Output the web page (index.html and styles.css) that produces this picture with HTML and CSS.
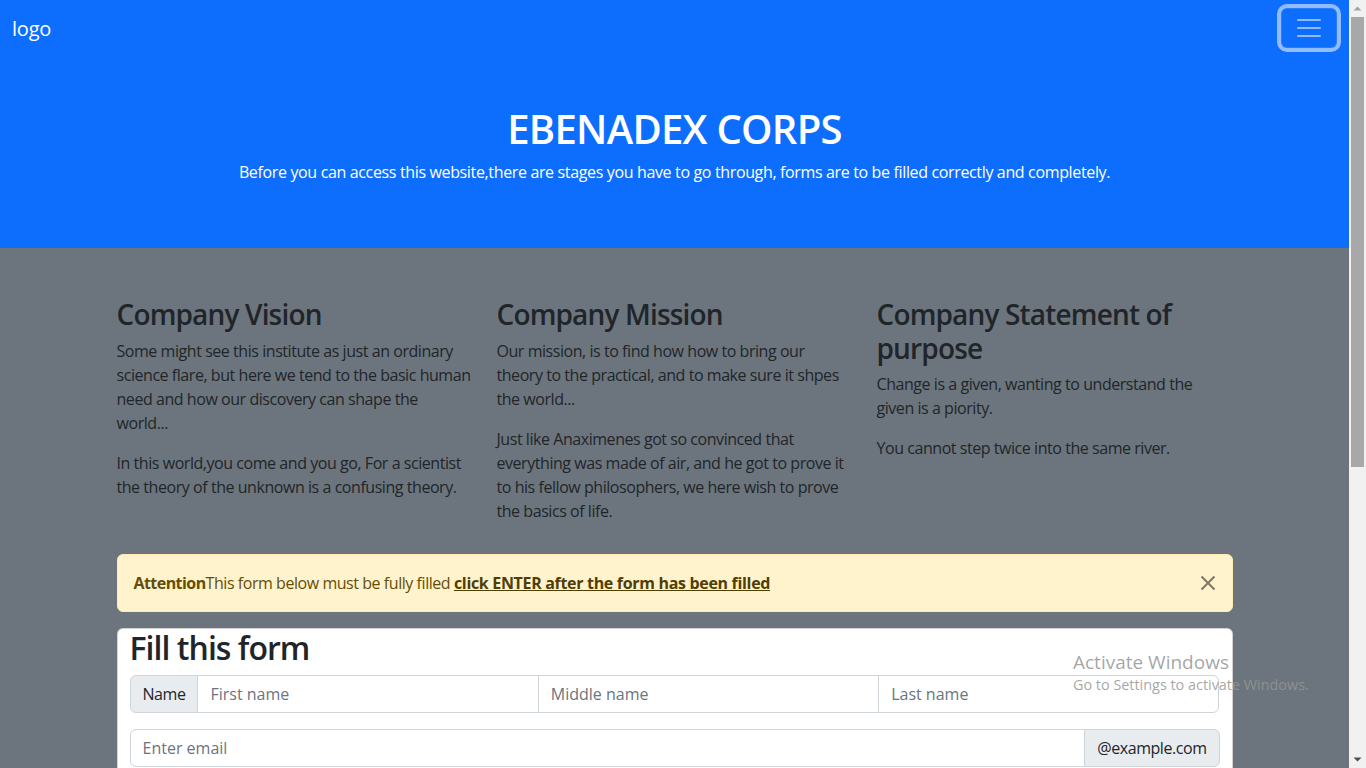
FILE: index.html
```html
<!DOCTYPE html>
<html lang="en">
<head>
<meta charset="utf-8">
<title>EBENADEX CORPS</title>
<link rel="stylesheet" href="styles.css">
</head>
<body>
<div class="page">
  <nav class="navbar">
    <a class="brand" href="#">logo</a>
    <button class="toggler" type="button" aria-label="Toggle navigation">
      <svg width="30" height="30" viewBox="0 0 30 30"><path d="M4 7h22M4 15h22M4 23h22" stroke="rgba(255,255,255,0.55)" stroke-width="2" stroke-linecap="round"/></svg>
    </button>
  </nav>
  <header class="hero">
    <h1>EBENADEX CORPS</h1>
    <p>Before you can access this website,there are stages you have to go through, forms are to be filled correctly and completely.</p>
  </header>
  <main class="section">
    <div class="container">
      <div class="cols">
        <div class="col">
          <h3>Company Vision</h3>
          <p>Some might see this institute as just an ordinary science flare, but here we tend to the basic human need and how our discovery can shape the world...</p>
          <p>In this world,you come and you go, For a scientist the theory of the unknown is a confusing theory.</p>
        </div>
        <div class="col">
          <h3>Company Mission</h3>
          <p>Our mission, is to find how how to bring our theory to the practical, and to make sure it shpes the world...</p>
          <p>Just like Anaximenes got so convinced that everything was made of air, and he got to prove it to his fellow philosophers, we here wish to prove the basics of life.</p>
        </div>
        <div class="col">
          <h3>Company Statement of purpose</h3>
          <p>Change is a given, wanting to understand the given is a piority.</p>
          <p>You cannot step twice into the same river.</p>
        </div>
      </div>
      <div class="alert">
        <strong>Attention</strong>This form below must be fully filled <a class="alert-link" href="#">click ENTER after the form has been filled</a>
        <button class="btn-close" type="button" aria-label="Close">
          <svg width="16" height="16" viewBox="0 0 16 16"><path d="M1.5 1.5l13 13M14.5 1.5l-13 13" stroke="#000" stroke-width="2"/></svg>
        </button>
      </div>
      <div class="card">
        <h2>Fill this form</h2>
        <div class="input-group">
          <span class="addon">Name</span>
          <input class="control" type="text" placeholder="First name">
          <input class="control" type="text" placeholder="Middle name">
          <input class="control" type="text" placeholder="Last name">
        </div>
        <div class="input-group">
          <input class="control" type="email" placeholder="Enter email">
          <span class="addon">@example.com</span>
        </div>
      </div>
    </div>
  </main>
  <div class="watermark">
    <div class="wm-title">Activate Windows</div>
    <div class="wm-sub">Go to Settings to activate Windows.</div>
  </div>
</div>
<div class="scrollbar">
  <div class="sb-arrow"><svg width="17" height="17" viewBox="0 0 17 17"><path d="M4.5 10.5h8l-4-4z" fill="#a3a3a3"/></svg></div>
  <div class="sb-track">
    <div class="sb-thumb"></div>
  </div>
  <div class="sb-arrow"><svg width="17" height="17" viewBox="0 0 17 17"><path d="M4.5 6.5h8l-4 4z" fill="#505050"/></svg></div>
</div>
</body>
</html>
```

FILE: styles.css
```css
* { box-sizing: border-box; }

html, body {
  margin: 0;
  height: 768px;
  overflow: hidden;
}

body {
  display: flex;
  font-family: "Open Sans", "Noto Sans", sans-serif;
  font-size: 16px;
  line-height: 1.5;
  color: #212529;
  background: #6c757d;
  letter-spacing: -0.028em;
}

.page {
  position: relative;
  flex: 1;
  min-width: 0;
  height: 768px;
  overflow: hidden;
}

/* navbar */
.navbar {
  background: #0d6efd;
  padding: 8px 12px;
  display: flex;
  align-items: center;
  justify-content: space-between;
}

.brand {
  color: #fff;
  text-decoration: none;
  font-size: 20px;
  line-height: 30px;
  padding: 6px 0 4px;
  letter-spacing: -0.01em;
}

.toggler {
  width: 56px;
  height: 40px;
  padding: 4px 12px;
  border: 1px solid rgba(255,255,255,0.1);
  border-radius: 6px;
  background: transparent;
  box-shadow: 0 0 0 4px rgba(255,255,255,0.55);
  display: flex;
  align-items: center;
  justify-content: center;
}

.toggler svg { display: block; }

/* hero */
.hero {
  background: #0d6efd;
  color: #fff;
  text-align: center;
  padding: 49px 48px 48px;
}

.hero h1 {
  margin: 0 0 7px;
  font-size: 40px;
  font-weight: 600;
  line-height: 1.2;
  letter-spacing: -0.018em;
}

.hero p {
  margin: 0 0 16px;
  letter-spacing: -0.022em;
}

/* gray section */
.section {
  padding-top: 50px;
}

.container {
  max-width: 1140px;
  margin: 0 auto;
  padding: 0 12px;
}

.cols {
  display: grid;
  grid-template-columns: repeat(3, 1fr);
  column-gap: 24px;
}

.col h3 {
  margin: 0 0 7px;
  font-size: 28px;
  font-weight: 600;
  line-height: 1.2;
  letter-spacing: -0.03em;
}

.col p {
  margin: 0 0 16px;
}

/* alert */
.alert {
  position: relative;
  margin: 15px 0 16px;
  padding: 16px 48px 16px 16px;
  background: #fff3cd;
  border: 1px solid #ffecb5;
  border-radius: 6px;
  color: #664d03;
}

.alert strong { font-weight: 700; letter-spacing: -0.035em; }

.alert-link {
  color: #523e02;
  font-weight: 700;
  text-decoration: underline;
  letter-spacing: -0.02em;
}

.btn-close {
  position: absolute;
  top: 0;
  right: 0;
  padding: 20px 16px;
  border: 0;
  background: transparent;
  opacity: 0.5;
  display: flex;
}

.btn-close svg { display: block; }

/* card */
.card {
  background: #fff;
  border: 1px solid rgba(0,0,0,0.175);
  border-radius: 6px;
  padding: 0 12px;
}

.card h2 {
  margin: 0 0 8px;
  font-size: 32px;
  font-weight: 600;
  line-height: 1.2;
  letter-spacing: -0.03em;
}

.input-group {
  display: flex;
  margin-bottom: 16px;
}

.addon {
  padding: 6px 12px;
  font-size: 16px;
  line-height: 24px;
  color: #212529;
  background: #e9ecef;
  border: 1px solid #ced4da;
  white-space: nowrap;
}

.control {
  flex: 1 1 0;
  min-width: 0;
  padding: 6px 12px;
  font: inherit;
  font-size: 16px;
  line-height: 24px;
  color: #212529;
  background: #fff;
  border: 1px solid #ced4da;
  margin: 0;
}

.control::placeholder { color: #6c757d; }

.input-group > * + * { margin-left: -1px; }

.input-group > :first-child { border-radius: 6px 0 0 6px; }
.input-group > :last-child { border-radius: 0 6px 6px 0; }

/* watermark */
.watermark {
  position: absolute;
  left: 1073px;
  top: 649px;
  color: rgba(150,150,150,0.85);
  pointer-events: none;
  letter-spacing: 0;
}

.wm-title {
  font-size: 19px;
  line-height: 26px;
}

.wm-sub {
  font-size: 14.4px;
  line-height: 20px;
}

/* scrollbar */
.scrollbar {
  width: 17px;
  flex: 0 0 17px;
  height: 768px;
  background: #f1f1f1;
  display: flex;
  flex-direction: column;
}

.sb-arrow {
  height: 17px;
  flex: 0 0 17px;
}

.sb-arrow svg { display: block; }

.sb-track {
  flex: 1;
  padding: 0 2px;
}

.sb-thumb {
  height: 450px;
  background: #a8a8a8;
}
```
